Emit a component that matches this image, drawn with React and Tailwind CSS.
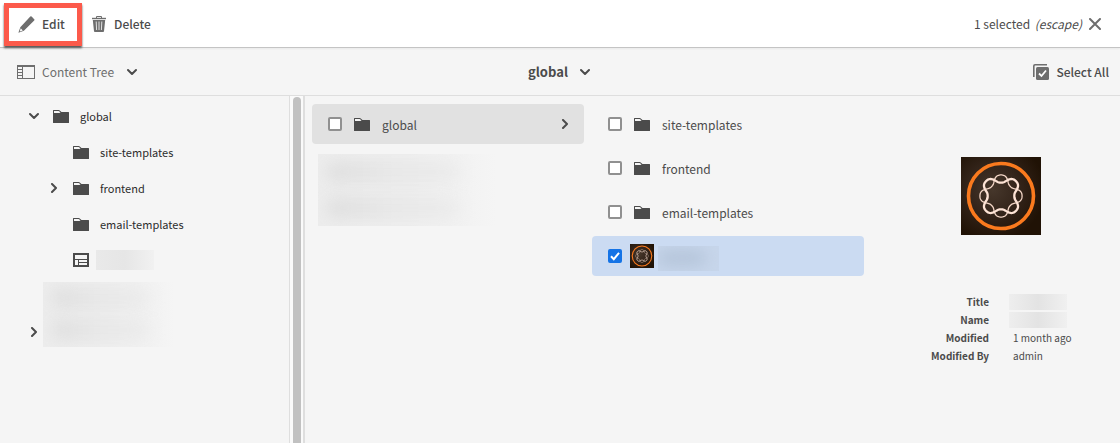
// React components
import { useState } from 'react';


// Options
const treeItems = [
  { name: "global", level: 0, toggle: "down", icon: "folder" },
  { name: "site-templates", level: 1, icon: "folder" },
  { name: "frontend", level: 1, toggle: "right", icon: "folder" },
  { name: "email-templates", level: 1, icon: "folder" },
  { name: "", level: 1, icon: "layout" },
];

const folderItems = ["site-templates", "frontend", "email-templates"];

// Closed wave around the centre of the emblem, with rounded lobes
const wavePath = (amplitude) => {
  const points = [];
  for (let i = 0; i < 160; i++) {
    const angle = (i / 160) * Math.PI * 2;
    const radius = 17.2 + amplitude * (Math.cos(angle * 4) - 0.08 * Math.cos(angle * 12));
    const x = 40 + radius * Math.cos(angle);
    const y = 39 + radius * Math.sin(angle);
    points.push(`${x.toFixed(2)} ${y.toFixed(2)}`);
  }
  return `M${points.join("L")}Z`;
};

// Icons
const ChevronIcon = ({ right = false }) => (
  <svg width="10" height="10" viewBox="0 0 10 10" fill="none" stroke="#4b4b4b" strokeWidth="2" strokeLinecap="round" strokeLinejoin="round" aria-hidden="true">
    <path d={right ? "M3 1l4 4-4 4" : "M1 3l4 4 4-4"} />
  </svg>
);

const FolderIcon = () => (
  <svg width="16" height="13" viewBox="0 0 16 13" fill="#4b4b4b" aria-hidden="true">
    <path d="M0 .5A.5.5 0 0 1 .5 0h5.2a1 1 0 0 1 .7.3L8.500 2H15.500a.5.5 0 0 1 .5.5V12.500a.5.5 0 0 1-.5.5H.5a.5.5 0 0 1-.5-.5z" />
    <path d="M1 1h4.600L7.500 2.300 6.500 3H1z" fill="#f5f5f5" />
  </svg>
);

const LayoutIcon = () => (
  <svg width="16" height="14" viewBox="0 0 16 14" fill="none" stroke="#4b4b4b" aria-hidden="true">
    <rect x="1" y="1" width="14" height="12" strokeWidth="2" />
    <path d="M2 6.500h12M5.500 7v5M6 9.500h8" />
  </svg>
);

const PencilIcon = () => (
  <svg width="17" height="17" viewBox="0 0 17 17" fill="#6e6e6e" aria-hidden="true">
    <path d="M12.300.6a.9.9 0 0 1 1.300 0l2.600 2.600a.9.9 0 0 1 0 1.300L5.900 14.800.4 16.700l1.900-5.500z" />
    <path d="M2.700 12.200l2.100 2.200-3 1z" fill="#fff" />
  </svg>
);

const TrashIcon = () => (
  <svg width="14" height="16" viewBox="0 0 14 16" fill="none" stroke="#6e6e6e" aria-hidden="true">
    <path d="M0 2.500h14" strokeWidth="1.400" />
    <path d="M4.500 2V.500h5V2" />
    <path d="M.8 4h12.400L12 15.200a.9.9 0 0 1-.9.8H2.900a.9.9 0 0 1-.9-.8z" fill="#6e6e6e" stroke="none" />
    <path d="M4.200 5.500l.4 8.500M7 5.500V14M9.800 5.500L9.400 14" stroke="#fff" strokeWidth=".8" />
  </svg>
);

const PanelIcon = () => (
  <svg width="18" height="14" viewBox="0 0 18 14" fill="none" stroke="#6e6e6e" aria-hidden="true">
    <rect x=".5" y=".5" width="17" height="13" />
    <path d="M0 1h18" strokeWidth="2" />
    <path d="M5.500 1v12" />
    <path d="M1 4.500h4M1 7.500h4M1 10.500h4" strokeWidth="1.200" />
  </svg>
);

const SelectAllIcon = () => (
  <svg width="16" height="16" viewBox="0 0 16 16" fill="none" stroke="#6e6e6e" aria-hidden="true">
    <path d="M.8 13V2a1.200 1.200 0 0 1 1.200-1.200H14" strokeWidth="1.600" />
    <rect x="3" y="3" width="13" height="13" rx="1.500" fill="#6e6e6e" stroke="none" />
    <path d="M6 9.500l2.500 2.500L13 6.500" stroke="#fff" strokeWidth="1.800" />
  </svg>
);

const CloseIcon = () => (
  <svg width="12" height="12" viewBox="0 0 12 12" fill="none" stroke="#6e6e6e" strokeWidth="2" strokeLinecap="round" aria-hidden="true">
    <path d="M1 1l10 10M11 1L1 11" />
  </svg>
);

const Emblem = ({ className, id }) => (
  <svg viewBox="0 0 80 78" preserveAspectRatio="none" fill="none" className={className} aria-hidden="true">
    <defs>
      <radialGradient id={id} cx="40%" cy="42%" r="65%">
        <stop offset="0" stopColor="#46372b" />
        <stop offset=".5" stopColor="#33241a" />
        <stop offset="1" stopColor="#201205" />
      </radialGradient>
    </defs>
    <rect width="80" height="78" fill={`url(#${id})`} />
    <circle cx="40" cy="39" r="32.500" stroke="#fa7a1e" strokeWidth="3.600" />
    <path d={wavePath(4.2)} stroke="#f3d6c6" strokeWidth="1.300" />
    <path d={wavePath(-4.2)} stroke="#fde3d5" strokeWidth="2.300" />
  </svg>
);

// Shared
const Checkbox = ({ id, label, checked, onChange }) => (
  <span className="relative flex">
    <input
      id={id}
      type="checkbox"
      aria-label={label}
      checked={checked}
      onChange={onChange}
      className="peer size-[14px] appearance-none rounded-xs border-2 border-[#909090] bg-white checked:border-[#1473e6] checked:bg-[#1473e6]"
    />
    <svg viewBox="0 0 14 14" fill="none" stroke="#fff" strokeWidth="2" className="pointer-events-none absolute inset-0 hidden size-[14px] peer-checked:block" aria-hidden="true">
      <path d="M3 7.200l2.800 3L11 3.800" />
    </svg>
  </span>
);

const HiddenLines = ({ className }) => (
  <div className={`flex flex-col justify-around overflow-hidden bg-linear-to-r from-[#ededed] via-[#eeeeee] to-[#f5f5f5] ${className}`}>
    <div className="ml-2 h-5 w-3/4 rounded-full bg-linear-to-r from-[#dddddd] via-[#e7e7e7] to-[#ebebeb] blur-sm"></div>
    <div className="ml-2 h-5 w-3/4 rounded-full bg-linear-to-r from-[#dddddd] via-[#e7e7e7] to-[#ebebeb] blur-sm"></div>
  </div>
);

const App = () => {
  // Select State
  const [selected, setSelected] = useState(["page"]);

  const toggleItem = (name) => {
    setSelected(selected.includes(name) ? selected.filter(item => item !== name) : [...selected, name]);
  };

  return (
    <div className="flex min-h-screen flex-col bg-[#f5f5f5] font-['Noto_Sans_CJK_JP','Open_Sans',sans-serif] text-xs leading-5 text-[#4b4b4b]">

      {/* Action Bar */}
      <header className="relative flex h-12 items-center justify-between border-b border-[#c4c4c4] bg-white pt-px pr-[19px] pl-1 shadow-xs">
        <div className="flex items-center gap-[10px]">
          <button className="flex h-[43px] w-[78px] items-center gap-[7px] border-5 border-[#fc5a4b] pl-[9px] font-medium shadow-[0_2px_2px_#555]">
            <PencilIcon />
            Edit
          </button>
          <button className="flex items-center gap-2 font-medium">
            <TrashIcon />
            Delete
          </button>
        </div>
        <button className="flex items-center gap-[7px]">
          <span>{selected.length} selected <i className="ml-[2px]">(escape)</i></span>
          <CloseIcon />
        </button>
      </header>

      {/* Navigation Bar */}
      <div className="grid h-12 grid-cols-[1fr_auto_1fr] items-center border-b border-[#dedede] pr-[11px] pl-[17px]">
        <button className="flex items-center gap-[7px] justify-self-start text-[#6e6e6e]">
          <PanelIcon />
          Content Tree
          <span className="pl-1.5"><ChevronIcon /></span>
        </button>
        <button className="mr-2 flex items-center gap-3 text-[13px] font-bold">
          global
          <ChevronIcon />
        </button>
        <button className="flex items-center gap-[7px] justify-self-end font-medium">
          <SelectAllIcon />
          Select All
        </button>
      </div>

      <div className="flex grow">

        {/* Content Tree */}
        <nav className="w-[290px] shrink-0 border-r border-[#dedede] pt-[2px] text-[11px] text-[#2c2c2c]">
          <ul>
            {treeItems.map((item, index) => (
              <li key={index} className={`flex h-9 items-center ${item.level ? "pl-11" : "pl-6"}`}>
                <span className="mr-[9px] flex w-5 justify-center">
                  {item.toggle && (
                    <button aria-label={`Toggle ${item.name}`}>
                      <ChevronIcon right={item.toggle === "right"} />
                    </button>
                  )}
                </span>
                <span className="mr-[11px]">{item.icon === "folder" ? <FolderIcon /> : <LayoutIcon />}</span>
                {item.name
                  ? <a href="#">{item.name}</a>
                  : <span className="-ml-1 h-5 w-[58px] bg-linear-to-r from-[#e9e9e9] via-[#e6e6e6] to-[#f1f1f1]"></span>}
              </li>
            ))}
            <li className="flex h-[72px] items-center pl-6">
              <button aria-label="Toggle item" className="flex w-[19px] justify-center self-end pb-[13px]">
                <ChevronIcon right />
              </button>
              <HiddenLines className="h-[65px] w-[132px]" />
            </li>
          </ul>
        </nav>

        {/* Scroll Track */}
        <div className="flex w-[15px] shrink-0 border-r-2 border-[#dedede] bg-[#fafafa] pt-[1px] pl-[3px]">
          <div className="w-2 rounded-t-full bg-[#c1c1c1]"></div>
        </div>

        <main className="flex grow gap-2 pt-2 pl-[7px]">

          {/* First Column */}
          <div className="w-[272px] shrink-0">
            <div className="flex h-10 items-center gap-2 rounded-sm bg-[#e1e1e1] pr-[14px] pl-4">
              <Checkbox id="root-global" checked={selected.includes("global")} onChange={() => toggleItem("global")} />
              <span className="flex w-6 justify-center"><FolderIcon /></span>
              <label htmlFor="root-global" className="grow pt-[2px]">global</label>
              <ChevronIcon right />
            </div>
            <HiddenLines className="mt-[10px] ml-[6px] h-[72px] w-[178px]" />
          </div>

          {/* Second Column */}
          <div className="flex w-[272px] shrink-0 flex-col gap-1">
            {folderItems.map(name => (
              <div key={name} className="flex h-10 items-center gap-2 pl-4">
                <Checkbox id={name} checked={selected.includes(name)} onChange={() => toggleItem(name)} />
                <span className="flex w-6 justify-center"><FolderIcon /></span>
                <label htmlFor={name} className="pt-[2px]">{name}</label>
              </div>
            ))}
            <div className="flex h-10 items-center gap-2 rounded-sm bg-[#cbdbf2] pl-4">
              <Checkbox label="Page" checked={selected.includes("page")} onChange={() => toggleItem("page")} />
              <Emblem id="emblem-small" className="size-6" />
              <div className="-ml-1 mt-1 flex h-[25px] w-[61px] items-center overflow-hidden bg-[#c7d6eb]">
                <div className="h-3 w-12 rounded-full bg-[#afbfd4] blur-sm"></div>
              </div>
            </div>
          </div>

          {/* Preview */}
          <section className="flex grow flex-col items-center pt-[53px] pl-[10px]">
            <Emblem id="emblem-large" className="h-[78px] w-20" />
            <dl className="mt-[58px] grid w-full grid-cols-2 gap-x-6 text-[10px] leading-[18px]">
              <dt className="text-right font-bold">Title</dt>
              <dd className="flex items-center"><span className="-ml-1 h-4 w-[58px] bg-linear-to-r from-[#eeeeee] via-[#e3e3e3] to-[#f0f0f0]"></span></dd>
              <dt className="text-right font-bold">Name</dt>
              <dd className="flex items-center"><span className="-ml-1 h-4 w-[58px] bg-linear-to-r from-[#eeeeee] via-[#e3e3e3] to-[#f0f0f0]"></span></dd>
              <dt className="text-right font-bold">Modified</dt>
              <dd>1 month ago</dd>
              <dt className="text-right font-bold">Modified By</dt>
              <dd>admin</dd>
            </dl>
          </section>
        </main>
      </div>
    </div>
  );
};

export default App;
